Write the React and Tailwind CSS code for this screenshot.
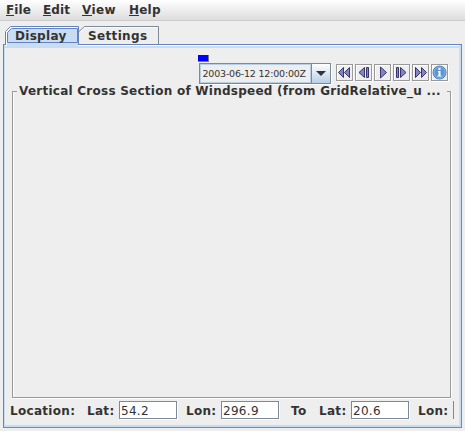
import React from 'react';

const bold = "font-['DejaVu_Sans',sans-serif] font-bold text-[#333333] whitespace-pre";

function Menu({ first, rest, className }) {
  return (
    <div className={`h-5 leading-[21px] text-[12px] ${bold} ${className}`}>
      <span className="inline-block h-[16px] leading-[21px] border-b border-[#333333]">{first}</span>{rest}
    </div>
  );
}

function Field({ value, className = '' }) {
  return (
    <div className={`h-[18px] w-[58px] shrink-0 border border-[#7a8a99] bg-white pl-px font-['DejaVu_Sans',sans-serif] text-[12px] leading-[18px] tracking-[0.3px] text-[#333333] shadow-[1px_1px_0_#ffffff] ${className}`}>
      {value}
    </div>
  );
}

function Label({ children, className }) {
  return <div className={`shrink-0 text-[12px] leading-[20px] tracking-[0.3px] ${bold} ${className}`}>{children}</div>;
}

function Tool({ children }) {
  return (
    <div className="h-[17px] w-[17px] border border-[#999999] bg-[#eeeeee] shadow-[1px_1px_0_#ffffff,inset_1px_1px_0_#ffffff]">
      <svg width="15" height="15" viewBox="0 0 15 15" fill="#8484be" stroke="#36366c" strokeWidth="1">
        {children}
      </svg>
    </div>
  );
}

export default function App() {
  return (
    <div className="flex h-[431px] w-[465px] flex-col overflow-hidden bg-[#eeeeee]">
      <div className="flex h-[21px] shrink-0 border-b border-[#cccccc] bg-gradient-to-b from-white to-[#dddddd] pl-[6px]">
        <Menu first="F" rest="ile" className="w-[37px] tracking-[0.1px]" />
        <Menu first="E" rest="dit" className="w-[39px] tracking-[0.1px]" />
        <Menu first="V" rest="iew" className="w-[47px] tracking-[0.3px]" />
        <Menu first="H" rest="elp" className="w-[40px] tracking-[0.2px]" />
      </div>
      <div className="flex h-[23px] shrink-0 pl-[5px] pt-[5px]">
        <div className="relative z-10 h-[18px] w-[74px]">
          <svg className="absolute top-0 left-0" width="74" height="20" fill="none">
            <path d="M.5 18V5.5L5.5.5H73.5V18" fill="#ffffff" stroke="#6382bf" />
            <path d="M1 18H2V20H1Z" fill="#ffffff" />
            <path d="M2 17H73V20H2Z" fill="#c8ddf2" />
            <path d="M2.5 16.5V6.5L6.5 2.5H72.5V16.5Z" fill="#c8ddf2" stroke="#6382bf" />
          </svg>
          <div className={`relative pl-[10px] text-[12px] leading-[20px] tracking-[0.3px] ${bold}`}>Display</div>
        </div>
        <div className="relative h-[18px] w-[80px]">
          <svg className="absolute inset-0" width="80" height="18" fill="none">
            <path d="M0 5.5L5.5.5H79.5V18" stroke="#7a8a99" />
            <path d="M1 6.5L6 1.5H78.5" stroke="#ffffff" />
          </svg>
          <div className={`relative pl-[9px] text-[12px] leading-[20px] tracking-[0.35px] ${bold}`}>Settings</div>
        </div>
      </div>
      <div className="ml-[3px] h-[384px] w-[459px] shrink-0 border border-[#6382bf] border-b-[#7a8a99] border-r-[#7a8a99]">
        <div className="flex h-[382px] flex-col border-2 border-l border-t-0 border-[#c8ddf2] shadow-[inset_0_1px_0_#ffffff,inset_0_3px_0_#c8ddf2]">
          <div className="flex h-[39px] pl-[193px] pt-[10px]">
            <div className="w-[133px]">
              <div className="h-[7px] w-[11px] border-b border-r border-[#777777] bg-[#0000ff]" />
              <div className="ml-px mt-[1px] flex h-[21px] w-[132px] border border-[#7a8a99] bg-[#eeeeee] shadow-[1px_1px_0_#ffffff]">
                <div className="w-[111px] shrink-0 border border-[#b8cfe5] pl-[1.5px] font-['DejaVu_Sans',sans-serif] text-[9.5px] leading-[17px] tracking-[-0.2px] whitespace-pre text-[#333333]">2003-06-12 12:00:00Z</div>
                <div className="flex flex-1 items-center justify-center border-l border-[#7a8a99] bg-gradient-to-b from-white to-[#b8cfe5]">
                  <svg width="10" height="5"><path d="M0 0H10L5 5Z" fill="#333333" /></svg>
                </div>
              </div>
            </div>
            <div className="ml-[5px] mt-[9px] flex gap-[2px]">
              <Tool><path d="M6.5 2.5V12.5L1.5 7.5ZM12.5 2.5V12.5L7.5 7.5Z" /></Tool>
              <Tool><path d="M8.5 2.5V12.5L3 7.5ZM10.5 2.5H12.5V12.5H10.5Z" /></Tool>
              <Tool><path d="M5.5 2V13L11.5 7.5Z" /></Tool>
              <Tool><path d="M2.5 2.5H4.5V12.5H2.5ZM6.5 2.5V12.5L12 7.5Z" /></Tool>
              <Tool><path d="M2.5 2.5V12.5L7.5 7.5ZM8.5 2.5V12.5L13.5 7.5Z" /></Tool>
              <Tool>
                <circle cx="7.5" cy="7.5" r="6.5" fill="#5c96cf" stroke="#4a7db8" />
                <circle cx="7.5" cy="7.5" r="5.5" fill="none" stroke="#8db8e2" />
                <path d="M6.5 3H8.5V5H6.5ZM6 6H8.5V10.5H9.5V11.5H5.5V10.5H6.5V7H6Z" fill="#ffffff" stroke="none" />
              </Tool>
            </div>
          </div>
          <fieldset className="ml-[7px] mr-[8px] mt-0 h-[314px] shrink-0 border border-[#999999] pl-[4px] shadow-[1px_0_0_#ffffff,inset_1px_0_0_#ffffff]">
            <legend className={`h-[14px] w-[430px] pl-[2px] text-[12px] leading-[15px] tracking-[0.25px] ${bold}`}>Vertical Cross Section of Windspeed (from GridRelative_u ...</legend>
          </fieldset>
          <div className="ml-[7px] mr-[8px] h-px shrink-0 bg-white" />
          <div className="flex h-[22px] shrink-0 overflow-hidden pl-[5px] pt-[2px]">
            <Label className="w-[77px]">Location:</Label>
            <Label className="w-[32px]">Lat:</Label>
            <Field value="54.2" />
            <Label className="ml-[9px] w-[35px]">Lon:</Label>
            <Field value="296.9" />
            <Label className="ml-[12px] w-[28px]">To</Label>
            <Label className="w-[32px]">Lat:</Label>
            <Field value="20.6" />
            <Label className="ml-[9px] w-[35px]">Lon:</Label>
            <div className="h-[18px] w-px shrink-0 bg-[#7a8a99]" />
          </div>
        </div>
      </div>
    </div>
  );
}
